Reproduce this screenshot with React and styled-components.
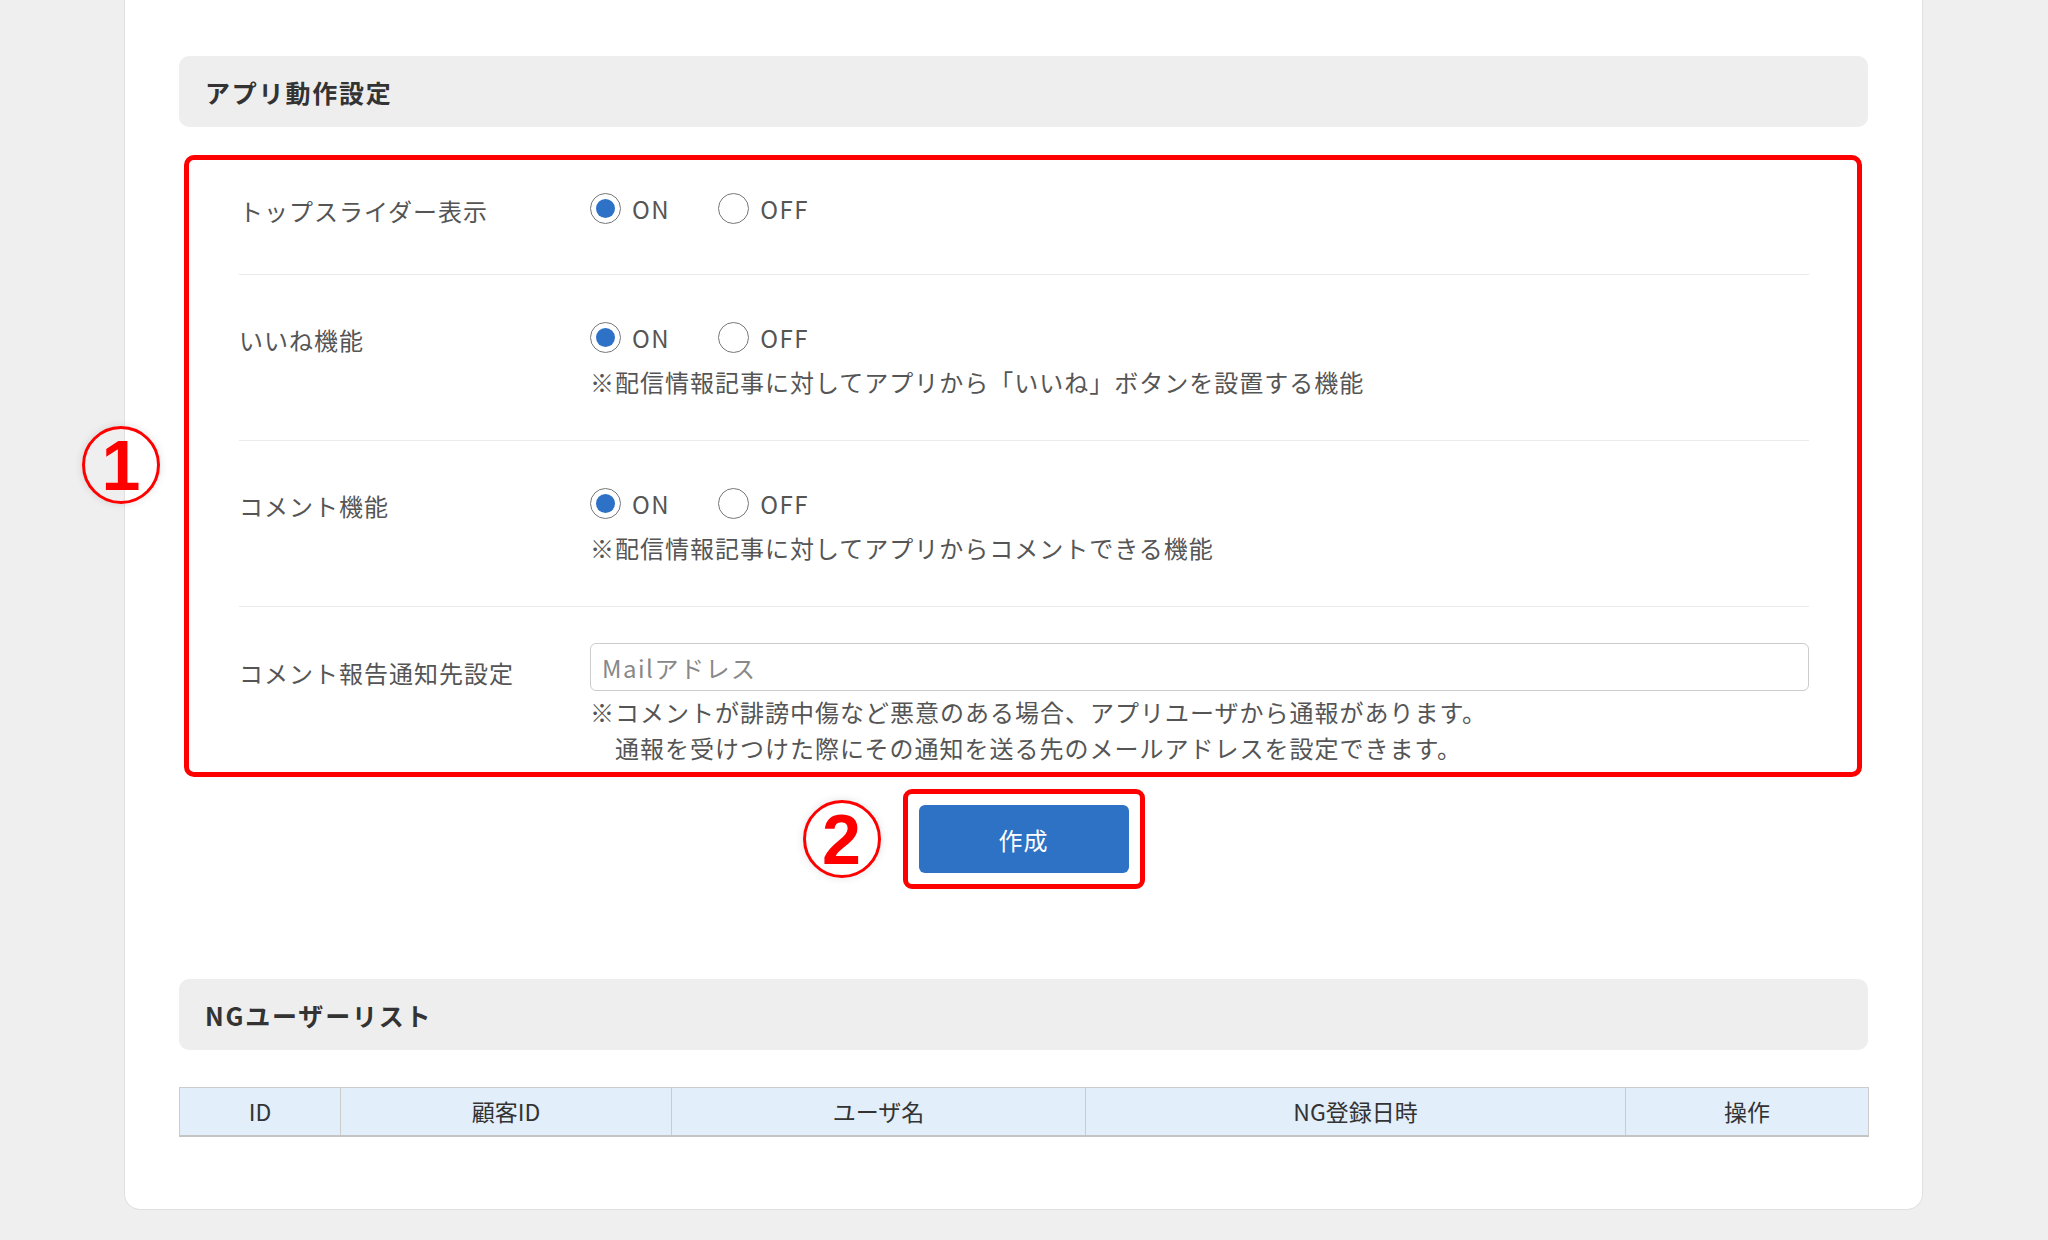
import styled, { createGlobalStyle } from 'styled-components'

const GlobalStyle = createGlobalStyle`
    html, body {
        margin: 0;
        padding: 0;
        background: #efefef;
    }
    body {
        font-family: 'Noto Sans CJK JP', 'Noto Sans', sans-serif;
        color: #555;
    }
    * { box-sizing: border-box; }
`

const Page = styled.div`
    padding: 0 125px 32px 124px;
`

const Card = styled.div`
    background: #fff;
    border: 1px solid #e0e0e0;
    border-top: none;
    border-radius: 0 0 16px 16px;
    padding: 56px 54px 72px;
`

const SectionHeader = styled.h2`
    margin: 0;
    height: 71px;
    display: flex;
    align-items: center;
    padding-left: 26px;
    background: #eeeeee;
    border-radius: 10px;
    font-size: 25px;
    font-weight: 700;
    letter-spacing: 1.8px;
    color: #333;
`

const RedFrame = styled.div`
    position: relative;
    border: 5px solid #ff0000;
    border-radius: ${p => p.$radius || 10}px;
`

const FormFrame = styled(RedFrame)`
    margin: 28px 6px 0 5px;
    padding: 0 48px 0 50px;
`

const Marker = styled.div`
    position: absolute;
    left: ${p => p.$left}px;
    top: ${p => p.$top}px;
    width: 78px;
    height: 78px;
    border: 3px solid #ff0000;
    border-radius: 50%;
    display: flex;
    align-items: center;
    justify-content: center;
    font-family: 'Liberation Sans', Arial, sans-serif;
    font-weight: 700;
    font-size: 70px;
    line-height: 1;
    color: #ff0000;
    box-shadow: 0 0 8px rgba(0, 0, 0, 0.12);
    padding-top: 2px;
`

const Row = styled.div`
    display: grid;
    grid-template-columns: 351px 1fr;
    padding: ${p => p.$pt}px 0 ${p => p.$pb}px;
    border-bottom: ${p => (p.$last ? 'none' : '1px solid #ebebeb')};
`

const Label = styled.div`
    font-size: 24px;
    line-height: 36px;
    letter-spacing: 1px;
    color: #555;
    padding-top: ${p => p.$pt ?? 3}px;
`

const Control = styled.div`
    display: flex;
    flex-direction: column;
`

const RadioGroup = styled.div`
    display: flex;
    align-items: center;
    gap: 48px;
    height: 36px;
`

const RadioOption = styled.label`
    display: flex;
    align-items: center;
    gap: 11px;
    font-size: 24px;
    letter-spacing: 1.5px;
    color: #555;
`

const RadioMark = styled.span`
    width: 31px;
    height: 31px;
    border-radius: 50%;
    border: 1.5px solid #777;
    background: #fff;
    display: flex;
    align-items: center;
    justify-content: center;

    &::after {
        content: '';
        width: 19px;
        height: 19px;
        border-radius: 50%;
        background: ${p => (p.$checked ? '#2d72c6' : 'transparent')};
    }
`

const Note = styled.div`
    margin-top: ${p => p.$mt ?? 9}px;
    font-size: 24px;
    line-height: 36px;
    letter-spacing: 1px;
    color: #555;
    padding-left: ${p => p.$indent || 0}px;
`

const MailInput = styled.input`
    width: 100%;
    height: 48px;
    border: 1px solid #ccc;
    border-radius: 6px;
    padding: 0 11px;
    font-family: inherit;
    font-size: 24px;
    letter-spacing: 1.5px;
    color: #555;
    outline: none;

    &::placeholder {
        color: #888;
    }
`

const ButtonArea = styled.div`
    display: flex;
    justify-content: center;
    margin-top: 12px;
`

const ButtonFrame = styled(RedFrame)`
    padding: 11px;
`

const SubmitButton = styled.button`
    width: 210px;
    height: 68px;
    border: none;
    border-radius: 6px;
    background: #2d72c4;
    color: #fff;
    font-family: inherit;
    font-size: 24px;
    letter-spacing: 1px;
    cursor: pointer;
`

const ListSection = styled.div`
    margin-top: 90px;
`

const Table = styled.table`
    width: 100%;
    margin-top: 37px;
    border-collapse: collapse;
    table-layout: fixed;
`

const Th = styled.th`
    height: 48px;
    background: #e2eefa;
    border: 1px solid #cccccc;
    border-bottom: 2px solid #c4c4c4;
    font-size: 23px;
    font-weight: 400;
    color: #333;
    text-align: center;
`

function Radio({ options, value }) {
    return (
        <RadioGroup>
            {options.map(o => (
                <RadioOption key={o}>
                    <RadioMark $checked={o === value} />
                    {o}
                </RadioOption>
            ))}
        </RadioGroup>
    )
}

const columns = [
    { name: 'ID', width: 161 },
    { name: '顧客ID', width: 331 },
    { name: 'ユーザ名', width: 414 },
    { name: 'NG登録日時', width: 540 },
    { name: '操作', width: 243 },
]

export default function App() {
    return (
        <>
            <GlobalStyle />
            <Page>
                <Card>
                    <SectionHeader>アプリ動作設定</SectionHeader>
                    <FormFrame>
                        <Marker $left={-107} $top={266}>1</Marker>
                        <Row $pt={30} $pb={45}>
                            <Label>トップスライダー表示</Label>
                            <Control>
                                <Radio options={['ON', 'OFF']} value="ON" />
                            </Control>
                        </Row>
                        <Row $pt={44} $pb={40}>
                            <Label>いいね機能</Label>
                            <Control>
                                <Radio options={['ON', 'OFF']} value="ON" />
                                <Note>※配信情報記事に対してアプリから「いいね」ボタンを設置する機能</Note>
                            </Control>
                        </Row>
                        <Row $pt={44} $pb={40}>
                            <Label>コメント機能</Label>
                            <Control>
                                <Radio options={['ON', 'OFF']} value="ON" />
                                <Note>※配信情報記事に対してアプリからコメントできる機能</Note>
                            </Control>
                        </Row>
                        <Row $pt={36} $pb={6} $last>
                            <Label $pt={12}>コメント報告通知先設定</Label>
                            <Control>
                                <MailInput placeholder="Mailアドレス" />
                                <Note $mt={3}>※コメントが誹謗中傷など悪意のある場合、アプリユーザから通報があります。</Note>
                                <Note $mt={0} $indent={25}>通報を受けつけた際にその通知を送る先のメールアドレスを設定できます。</Note>
                            </Control>
                        </Row>
                    </FormFrame>
                    <ButtonArea>
                        <ButtonFrame $radius={9}>
                            <Marker $left={-105} $top={6}>2</Marker>
                            <SubmitButton>作成</SubmitButton>
                        </ButtonFrame>
                    </ButtonArea>
                    <ListSection>
                        <SectionHeader>NGユーザーリスト</SectionHeader>
                        <Table>
                            <colgroup>
                                {columns.map(c => (
                                    <col key={c.name} style={{ width: c.width }} />
                                ))}
                            </colgroup>
                            <thead>
                                <tr>
                                    {columns.map(c => (
                                        <Th key={c.name}>{c.name}</Th>
                                    ))}
                                </tr>
                            </thead>
                        </Table>
                    </ListSection>
                </Card>
            </Page>
        </>
    )
}
